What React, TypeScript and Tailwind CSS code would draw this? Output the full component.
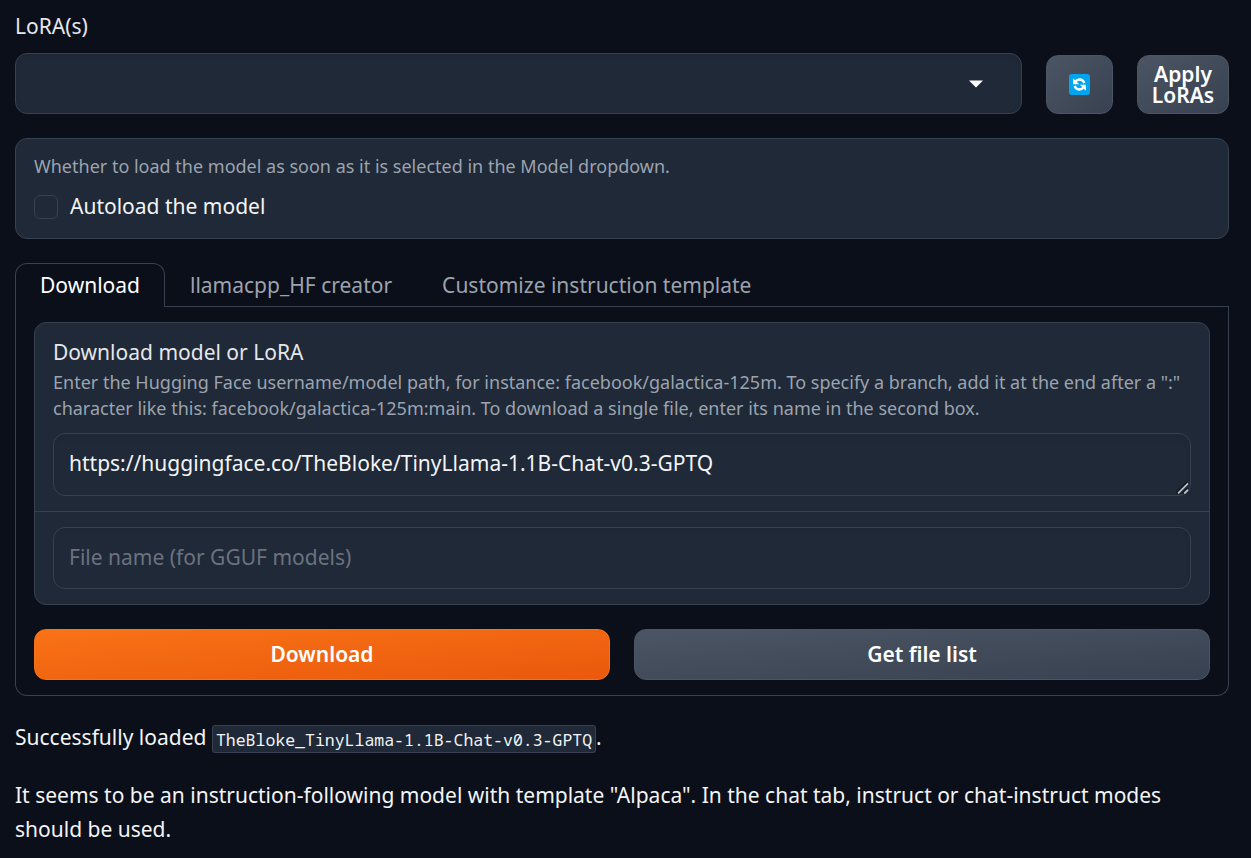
import React from "react";

const field =
  "rounded-[12px] border border-[#374151] bg-[#1f2937] shadow-[inset_0_3px_6px_0_rgba(0,0,0,0.05)]";
const secondary =
  "flex items-center justify-center rounded-[12px] border border-[#4b5563] bg-[linear-gradient(to_bottom_right,#4b5563,#374151)] font-semibold text-white";

function RefreshIcon() {
  return (
    <svg width="21" height="21" viewBox="0 0 21 21">
      <rect width="21" height="21" rx="3" fill="#00a4ef" />
      <g fill="none" stroke="#fff" strokeWidth="2.3">
        <path d="M6.3 7.8C8.4 4.7 13.6 4.4 15.4 9" />
        <path d="M14.7 13.2C12.6 16.3 7.4 16.6 5.6 12" />
      </g>
      <path d="M4.2 4.2V10.2H10.2Z" fill="#fff" />
      <path d="M16.8 16.8V10.8H10.8Z" fill="#fff" />
    </svg>
  );
}

export default function App() {
  return (
    <div className="flex h-[858px] w-[1251px] flex-col overflow-hidden bg-[#0b0f19] pl-[15px] pr-[22px] font-['Noto_Sans',sans-serif] text-[21px] text-[#f3f4f6]">
      <div className="flex h-[114px] items-end gap-6">
        <div className="flex h-[114px] w-[1007px] flex-col">
          <div className="h-[53px] pt-[10px] leading-[32px] text-[#e5e7eb]">LoRA(s)</div>
          <div className={`${field} flex h-[61px] items-center justify-end pr-[38px]`}>
            <svg className="mt-px" width="14" height="8" viewBox="0 0 14 8">
              <path d="M0 0.5H14L7 7.5Z" fill="#fff" />
            </svg>
          </div>
        </div>
        <button className={`${secondary} h-[59px] w-[67px]`}>
          <RefreshIcon />
        </button>
        <button className={`${secondary} h-[59px] w-[92px] leading-[21px]`}>
          <span>
            Apply
            <br />
            LoRAs
          </span>
        </button>
      </div>

      <div className="mt-6 flex h-[101px] shrink-0 flex-col rounded-[12px] border border-[#374151] bg-[#1f2937] px-[18px] pt-[14px]">
        <div className="text-[18px] leading-[27px] text-[#9ca3af]">
          Whether to load the model as soon as it is selected in the Model dropdown.
        </div>
        <label className="mt-[11px] flex h-8 items-center gap-3">
          <span className="size-6 rounded-[6px] border border-[#374151] bg-[#1f2937]" />
          <span className="pb-[2px] leading-[30px]">Autoload the model</span>
        </label>
      </div>

      <div className="mt-6 flex h-[44px] shrink-0">
        <div className="w-[150px] rounded-t-[12px] border border-b-0 border-[#374151] text-center leading-[43px] text-white">
          Download
        </div>
        <div className="flex flex-1 gap-[50px] border-b border-[#374151] pl-[25px] leading-[45px] text-[#9ca3af]">
          <span>llamacpp_HF creator</span>
          <span>Customize instruction template</span>
        </div>
      </div>

      <div className="flex h-[389px] shrink-0 flex-col rounded-b-[12px] border border-t-0 border-[#374151] px-[18px] pt-[15px]">
        <div className="flex h-[283px] flex-col rounded-[12px] border border-[#374151] bg-[#1f2937]">
          <div className="h-[189px] border-b border-[#374151] px-[18px] pt-[13px]">
            <div className="mb-px leading-[32px] text-[#e5e7eb]">Download model or LoRA</div>
            <div className="text-[18px] leading-[26px] text-[#9ca3af]">
              Enter the Hugging Face username/model path, for instance: facebook/galactica-125m. To specify a branch, add it at the end after a ":"
              <br />
              character like this: facebook/galactica-125m:main. To download a single file, enter its name in the second box.
            </div>
            <div className={`${field} relative mt-[12px] h-[63px] px-[15px] leading-[59px]`}>
              https://huggingface.co/TheBloke/TinyLlama-1.1B-Chat-v0.3-GPTQ
              <svg className="absolute bottom-0 right-0" width="15" height="14" viewBox="0 0 15 14">
                <path d="M1.4 12.2L11.9 1.7M7.7 12.2L12.4 7.8" stroke="#0b0f19" strokeWidth="2" />
                <path d="M3 12.4L13 2.4M9.2 12.4L13 8.8" stroke="#b8babd" strokeWidth="2" />
              </svg>
            </div>
          </div>
          <div className="px-[18px] pt-[15px]">
            <div className={`${field} h-[62px] px-[15px] leading-[58px] text-[#6b7280]`}>
              File name (for GGUF models)
            </div>
          </div>
        </div>
        <div className="mt-6 grid grid-cols-2 gap-6">
          <button className="h-[51px] rounded-[12px] border border-[#f97316] bg-[linear-gradient(to_bottom_right,#f97316,#ea580c)] font-semibold text-white">
            Download
          </button>
          <button className={`${secondary} h-[51px]`}>Get file list</button>
        </div>
      </div>

      <div className="pt-6 leading-[34px]">
        <p className="h-[34px]">
          Successfully loaded{" "}
          <code className="relative top-px rounded-[3px] border border-[#374151] bg-[#1f2937] px-[3px] pb-px pt-[2px] font-['Noto_Sans_Mono','DejaVu_Sans_Mono',monospace] text-[16.5px]">
            TheBloke_TinyLlama-1.1B-Chat-v0.3-GPTQ
          </code>
          .
        </p>
        <p className="mt-6">
          It seems to be an instruction-following model with template "Alpaca". In the chat tab, instruct or chat-instruct modes
          should be used.
        </p>
      </div>
    </div>
  );
}
